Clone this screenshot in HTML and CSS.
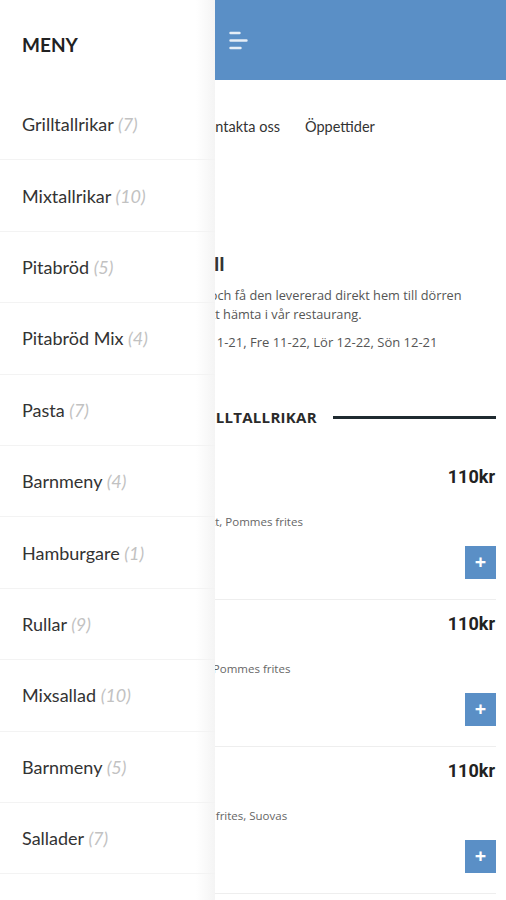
FILE: index.html
```html
<!DOCTYPE html>
<html lang="sv">
<head>
    <meta charset="UTF-8">
    <meta name="viewport" content="width=device-width, initial-scale=1.0">
    <title>Meny</title>
    <link rel="stylesheet" href="styles.css">
</head>
<body>
    <div class="page">
        <header class="topbar">
            <button class="toggle" aria-label="Meny">
                <svg width="20" height="20" viewBox="0 0 20 20">
                    <path d="M1.5 3h9M1.5 10.5h16M1.5 18h10" stroke="currentColor" stroke-width="2.4" stroke-linecap="round" fill="none"/>
                </svg>
            </button>
        </header>

        <nav class="mainnav">
            <a href="#">Om oss</a>
            <a href="#">Kontakta oss</a>
            <a href="#">Öppettider</a>
        </nav>

        <section class="hero">
            <h1>Välkommen till Pita Grill</h1>
            <p>Beställ alla dina favoriträtter idag och få den levererad direkt hem till dörren eller så kan man, självklart, välja att hämta i vår restaurang.</p>
            <p class="hours">Ordinarie öppettider är Mån-Tor 11-21, Fre 11-22, Lör 12-22, Sön 12-21</p>
        </section>

        <section class="category">
            <h2 class="cat-title"><span>Grilltallrikar</span></h2>

            <div class="dish">
                <div class="dish-head">
                    <span class="dish-name">1. Grilltallrik</span>
                    <span class="price">110kr</span>
                </div>
                <p class="dish-desc">Grillspett, sallad, bröd, kycklingfilé, kött, Pommes frites</p>
                <button class="add">+</button>
            </div>

            <div class="dish">
                <div class="dish-head">
                    <span class="dish-name">2. Kycklingtallrik</span>
                    <span class="price">110kr</span>
                </div>
                <p class="dish-desc">Kycklingfilé, sallader, vitlökssås, bröd, Pommes frites</p>
                <button class="add">+</button>
            </div>

            <div class="dish">
                <div class="dish-head">
                    <span class="dish-name">3. Renskavstallrik</span>
                    <span class="price">110kr</span>
                </div>
                <p class="dish-desc">Renskav, sallader, lingonsylt, Pommes frites, Suovas</p>
                <button class="add">+</button>
            </div>
        </section>
    </div>

    <aside class="drawer">
        <div class="drawer-head">MENY</div>
        <ul class="drawer-list">
            <li>Grilltallrikar <span class="count">(7)</span></li>
            <li>Mixtallrikar <span class="count">(10)</span></li>
            <li>Pitabröd <span class="count">(5)</span></li>
            <li>Pitabröd Mix <span class="count">(4)</span></li>
            <li>Pasta <span class="count">(7)</span></li>
            <li>Barnmeny <span class="count">(4)</span></li>
            <li>Hamburgare <span class="count">(1)</span></li>
            <li>Rullar <span class="count">(9)</span></li>
            <li>Mixsallad <span class="count">(10)</span></li>
            <li>Barnmeny <span class="count">(5)</span></li>
            <li>Sallader <span class="count">(7)</span></li>
        </ul>
    </aside>
</body>
</html>
```

FILE: styles.css
```css
body {
    margin: 0;
    font-family: "Open Sans", sans-serif;
    color: #333;
    background: #fff;
    overflow: hidden;
}

.page {
    height: 900px;
    overflow: hidden;
}

.topbar {
    height: 80px;
    background-color: #5a8fc6;
    display: flex;
    align-items: center;
    padding-left: 229px;
}

.toggle {
    background: none;
    border: none;
    padding: 0;
    color: rgba(255, 255, 255, 0.85);
    display: flex;
}

.mainnav {
    display: flex;
    justify-content: center;
    gap: 25px;
    padding: 38px 16px 0 10px;
    height: 20px;
    font-family: Lato, sans-serif;
    font-size: 14.5px;
}

.mainnav a {
    color: #333;
    text-decoration: none;
}

.hero {
    padding: 0 10px;
    margin-top: 114px;
}

.hero h1 {
    margin: 0;
    font-size: 17.6px;
    line-height: 24px;
    font-weight: 700;
    color: #333;
}

.hero p {
    max-width: 470px;
    margin: 10px 0 0;
    font-size: 12.75px;
    line-height: 19px;
    color: #555;
}

.hero .hours {
    margin-top: 9px;
    font-size: 13px;
}

.category {
    padding: 0 10px;
}

.cat-title {
    display: flex;
    align-items: center;
    gap: 16px;
    margin: 54px 0 0;
    font-size: 15px;
    line-height: 22px;
    text-transform: uppercase;
    letter-spacing: 0.3px;
    color: #2a2a2a;
}

.cat-title::before,
.cat-title::after {
    content: "";
    flex: 1;
    height: 3px;
    background: #1f2a30;
}

.dish {
    display: flex;
    flex-direction: column;
    padding: 12px 0 20px;
    border-bottom: 1px solid #eee;
}

.category .dish:first-of-type {
    margin-top: 25px;
}

.dish-head {
    display: flex;
    justify-content: space-between;
    align-items: center;
    height: 22px;
}

.dish-name {
    font-size: 16px;
    font-weight: 700;
}

.price {
    font-family: Roboto, sans-serif;
    font-size: 18px;
    font-weight: 700;
    color: #222;
    padding-right: 1px;
}

.dish-desc {
    margin: 26px 0 0;
    font-size: 11.5px;
    line-height: 18px;
    color: #666;
}

.add {
    align-self: flex-end;
    margin-top: 15px;
    width: 31px;
    height: 33px;
    border: none;
    background-color: #5a8fc6;
    color: #fff;
    font-family: "Open Sans", sans-serif;
    font-size: 20px;
    font-weight: 700;
    line-height: 1;
    padding: 0 0 2px;
}

/* side drawer over the page */
.drawer {
    position: fixed;
    top: 0;
    left: 0;
    bottom: 0;
    width: 215px;
    background: linear-gradient(to right, #fff 0, #fff 196px, #f4f4f4 215px);
    font-family: Lato, sans-serif;
}

.drawer-head {
    height: 89px;
    display: flex;
    align-items: center;
    padding-left: 22px;
    font-size: 19px;
    font-weight: 700;
    color: #222;
    box-sizing: border-box;
}

.drawer-list {
    list-style: none;
    margin: 0;
    padding: 0;
}

.drawer-list li {
    height: 71.4px;
    box-sizing: border-box;
    display: flex;
    align-items: center;
    padding-left: 22px;
    border-bottom: 1px solid #f3f3f3;
    font-size: 18px;
    color: #333;
    white-space: pre;
}

.count {
    font-style: italic;
    color: #c2c2c2;
}
```
